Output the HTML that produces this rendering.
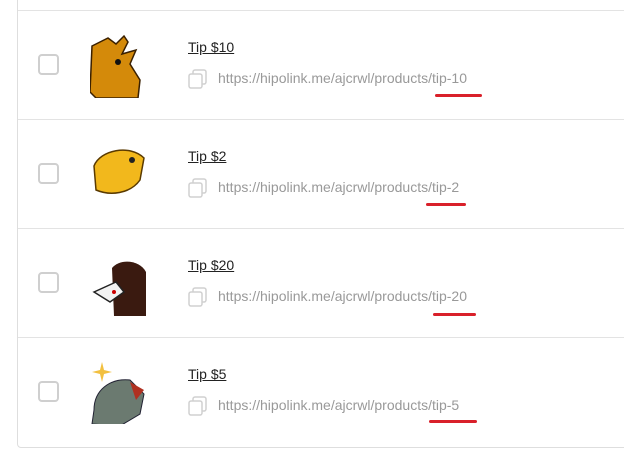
<!DOCTYPE html>
<html><head><style>
body{margin:0;width:624px;height:465px;background:#fff;position:relative;overflow:hidden;font-family:"Liberation Sans",sans-serif}
.box{position:absolute;left:17px;top:-10px;width:640px;height:456px;border:1px solid #dedede;border-radius:4px}
.sep{position:absolute;left:18px;width:606px;height:1px;background:#e3e3e3}
.cb{position:absolute;left:38px;width:17px;height:17px;border:2px solid #cfcfcf;border-radius:4px}
.t{position:absolute;left:188px;font-size:14px;color:#222;text-decoration:underline}
.u{position:absolute;left:218px;font-size:14px;color:#999}
.cp{position:absolute;left:188px;width:20px;height:20px}
.red{position:absolute;height:3px;background:#d9202a;border-radius:2px}
.img{position:absolute;left:90px;width:56px;height:64px}
</style></head><body>
<div class="box"></div>
<div class="sep" style="top:10px"></div>
<div class="sep" style="top:119px"></div>
<div class="sep" style="top:228px"></div>
<div class="sep" style="top:337px"></div>

<div class="cb" style="top:54px"></div>
<svg class="img" style="top:34px" viewBox="0 0 56 64"><path d="M2 12 L18 4 L26 10 L34 2 L38 8 L32 20 L46 16 L40 30 L50 46 L48 64 L6 64 L0 58 Z" fill="#d48a0a" stroke="#3a2000" stroke-width="1.5"/><circle cx="28" cy="28" r="3" fill="#111"/></svg>
<a class="t" style="top:39px">Tip $10</a>
<svg class="cp" style="top:69px" viewBox="0 0 20 20" fill="none" stroke="#d0d0d0" stroke-width="1.5"><rect x="1" y="5" width="13" height="14" rx="2"/><path d="M5 5V3a2 2 0 0 1 2-2h9a2 2 0 0 1 2 2v10a2 2 0 0 1-2 2h-2"/></svg>
<div class="u" style="top:70px">https://hipolink.me/ajcrwl/products/tip-10</div>
<div class="red" style="left:435px;top:94px;width:47px"></div>

<div class="cb" style="top:163px"></div>
<svg class="img" style="top:140px" viewBox="0 0 56 64"><path d="M4 26 C10 10 40 4 54 18 L50 40 C40 54 20 56 6 50 Z" fill="#f2b81c" stroke="#5a3a00" stroke-width="1.5"/><circle cx="42" cy="20" r="3" fill="#222"/></svg>
<a class="t" style="top:148px">Tip $2</a>
<svg class="cp" style="top:178px" viewBox="0 0 20 20" fill="none" stroke="#d0d0d0" stroke-width="1.5"><rect x="1" y="5" width="13" height="14" rx="2"/><path d="M5 5V3a2 2 0 0 1 2-2h9a2 2 0 0 1 2 2v10a2 2 0 0 1-2 2h-2"/></svg>
<div class="u" style="top:179px">https://hipolink.me/ajcrwl/products/tip-2</div>
<div class="red" style="left:426px;top:203px;width:40px"></div>

<div class="cb" style="top:272px"></div>
<svg class="img" style="top:252px" viewBox="0 0 56 64"><path d="M22 16 C30 6 50 8 56 20 L56 64 L24 64 Z" fill="#3a1a10"/><path d="M4 40 L26 30 L34 40 L20 50 Z" fill="#f2f2f2" stroke="#222" stroke-width="1.5"/><circle cx="24" cy="40" r="2" fill="#c00"/></svg>
<a class="t" style="top:257px">Tip $20</a>
<svg class="cp" style="top:287px" viewBox="0 0 20 20" fill="none" stroke="#d0d0d0" stroke-width="1.5"><rect x="1" y="5" width="13" height="14" rx="2"/><path d="M5 5V3a2 2 0 0 1 2-2h9a2 2 0 0 1 2 2v10a2 2 0 0 1-2 2h-2"/></svg>
<div class="u" style="top:288px">https://hipolink.me/ajcrwl/products/tip-20</div>
<div class="red" style="left:433px;top:313px;width:43px"></div>

<div class="cb" style="top:381px"></div>
<svg class="img" style="top:360px" viewBox="0 0 56 64"><path d="M4 50 C4 30 20 18 40 20 L54 34 L50 54 L30 66 L2 64 Z" fill="#6b7a70" stroke="#223" stroke-width="1"/><path d="M40 22 L54 30 L46 40 Z" fill="#b03020"/><path d="M12 2 L14 10 L22 12 L14 14 L12 22 L10 14 L2 12 L10 10Z" fill="#f2c040"/></svg>
<a class="t" style="top:366px">Tip $5</a>
<svg class="cp" style="top:396px" viewBox="0 0 20 20" fill="none" stroke="#d0d0d0" stroke-width="1.5"><rect x="1" y="5" width="13" height="14" rx="2"/><path d="M5 5V3a2 2 0 0 1 2-2h9a2 2 0 0 1 2 2v10a2 2 0 0 1-2 2h-2"/></svg>
<div class="u" style="top:397px">https://hipolink.me/ajcrwl/products/tip-5</div>
<div class="red" style="left:429px;top:420px;width:48px"></div>
</body></html>
